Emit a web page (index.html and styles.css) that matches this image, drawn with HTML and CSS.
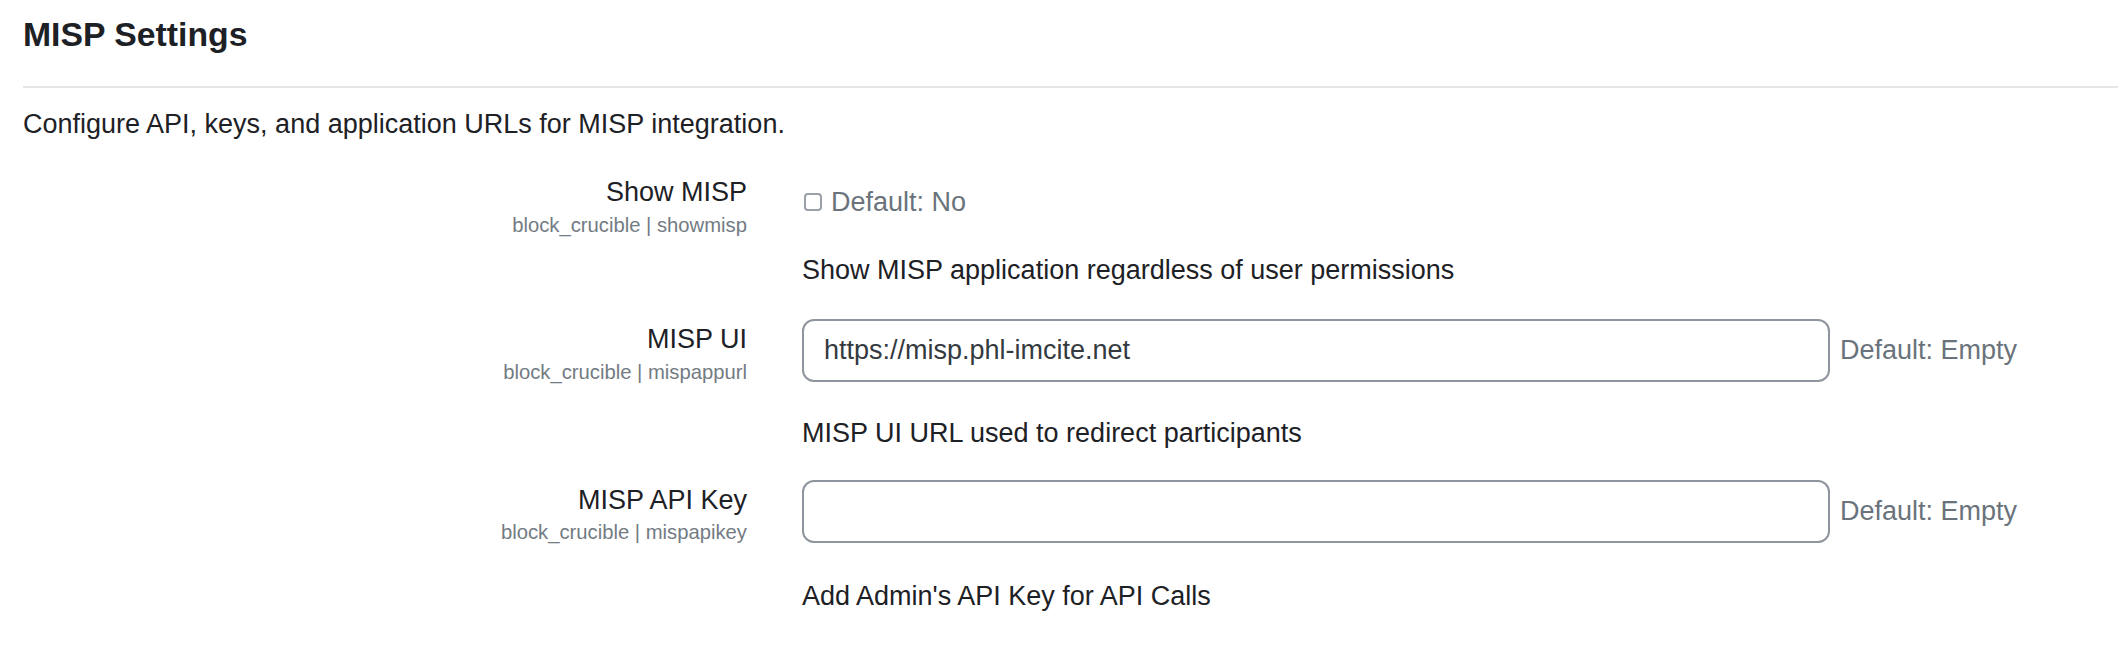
FILE: index.html
```html
<!DOCTYPE html>
<html lang="en">
<head>
<meta charset="utf-8">
<title>MISP Settings</title>
<link rel="stylesheet" href="styles.css">
</head>
<body>
<div class="page">
  <h3 class="heading">MISP Settings</h3>
  <hr class="rule">
  <p class="intro">Configure API, keys, and application URLs for MISP integration.</p>

  <div class="setting">
    <div class="setting-label">
      <label class="label-text" for="showmisp">Show MISP</label>
      <span class="shortname">block_crucible | showmisp</span>
    </div>
    <div class="setting-body">
      <div class="control control-check">
        <input type="checkbox" id="showmisp" class="check">
        <span class="default">Default: No</span>
      </div>
      <div class="desc desc-check">Show MISP application regardless of user permissions</div>
    </div>
  </div>

  <div class="setting">
    <div class="setting-label">
      <label class="label-text" for="mispappurl">MISP UI</label>
      <span class="shortname">block_crucible | mispappurl</span>
    </div>
    <div class="setting-body">
      <div class="control">
        <input type="text" id="mispappurl" class="text-input" value="https://misp.phl-imcite.net">
        <span class="default default-side">Default: Empty</span>
      </div>
      <div class="desc">MISP UI URL used to redirect participants</div>
    </div>
  </div>

  <div class="setting setting-last">
    <div class="setting-label">
      <label class="label-text" for="mispapikey">MISP API Key</label>
      <span class="shortname">block_crucible | mispapikey</span>
    </div>
    <div class="setting-body">
      <div class="control">
        <input type="text" id="mispapikey" class="text-input" value="">
        <span class="default default-side">Default: Empty</span>
      </div>
      <div class="desc desc-last">Add Admin's API Key for API Calls</div>
    </div>
  </div>
</div>
</body>
</html>
```
FILE: styles.css
```css
html, body {
  margin: 0;
  padding: 0;
  background: #ffffff;
}

body {
  font-family: "Liberation Sans", Arial, sans-serif;
  font-size: 27px;
  line-height: 1.5;
  color: #1d2125;
}

.page {
  padding: 14px 0 0 23px;
}

.heading {
  margin: 0;
  font-size: 33.75px;
  line-height: 1.2;
  font-weight: 700;
  color: #1d2125;
}

.rule {
  margin: 31px 0 0 0;
  border: 0;
  border-top: 2px solid #e6e6e6;
  height: 0;
}

.intro {
  margin: 16px 0 0 0;
}

.setting {
  display: flex;
  margin-top: 28px;
}

.setting + .setting {
  margin-top: 29px;
}

.setting + .setting-last {
  margin-top: 26.5px;
}

.setting-label {
  width: 724px;
  flex: 0 0 724px;
  display: flex;
  flex-direction: column;
  align-items: flex-end;
  text-align: right;
}

.label-text {
  line-height: 40.5px;
}

.shortname {
  font-size: 20.25px;
  line-height: 24px;
  color: #737b83;
}

.setting-body {
  margin-left: 55px;
  flex: 1;
}

.control {
  display: flex;
  align-items: center;
}

.control-check {
  padding-top: 10px;
  height: 40.5px;
}

.check {
  appearance: none;
  -webkit-appearance: none;
  width: 18px;
  height: 18px;
  margin: 0 9px 0 2px;
  border: 2px solid #9aa0a8;
  border-radius: 4px;
  background: #fff;
  box-sizing: border-box;
}

.default {
  color: #6a737b;
}

.default-side {
  margin-left: 10px;
}

.text-input {
  width: 1028px;
  height: 63px;
  box-sizing: border-box;
  border: 2px solid #8f959e;
  border-radius: 12px;
  padding: 0 20px;
  font-family: "Liberation Sans", Arial, sans-serif;
  font-size: 27px;
  color: #343a40;
  background: #fff;
  outline: none;
}

.desc {
  margin-top: 30.5px;
  line-height: 40.5px;
}

.desc-check {
  margin-top: 27px;
}

.desc-last {
  margin-top: 33px;
}
```
